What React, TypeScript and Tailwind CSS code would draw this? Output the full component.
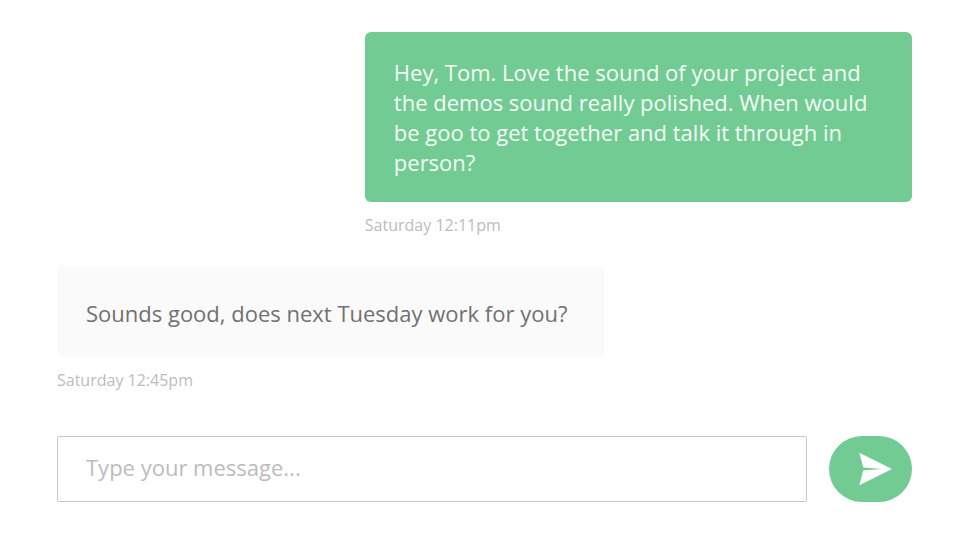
import { useState } from "react";

type Message = { text: string; time: string; sent: boolean };

const messages: Message[] = [
  {
    text: "Hey, Tom. Love the sound of your project and the demos sound really polished. When would be goo to get together and talk it through in person?",
    time: "Saturday 12:11pm",
    sent: true,
  },
  { text: "Sounds good, does next Tuesday work for you?", time: "Saturday 12:45pm", sent: false },
];

function Bubble({ message }: { message: Message }) {
  return (
    <article className={message.sent ? "w-[64%] self-end" : "w-[64%] self-start"}>
      <p
        className={
          message.sent
            ? "rounded-md bg-[#72cb93] px-[29px] pt-[25px] pb-[25px] text-[22px] leading-[30px] text-[#f4fbf6]"
            : "rounded-md bg-[#fafafa] px-[29px] pt-8 pb-[29px] text-[22px] leading-[30px] text-[#717171]"
        }
      >
        {message.text}
      </p>
      <time className="mt-3 block text-[16px] leading-[22px] text-[#bcbcbc]">{message.time}</time>
    </article>
  );
}

export default function App() {
  const [draft, setDraft] = useState("");
  return (
    <main className="min-h-screen bg-white pt-8 pr-14 pb-10 pl-[57px] font-['Open_Sans',sans-serif]">
      <section className="flex flex-col gap-[30px]" aria-label="Conversation">
        {messages.map((message) => (
          <Bubble key={message.time} message={message} />
        ))}
      </section>
      <form
        className="mt-[45px] flex gap-[22px]"
        onSubmit={(event) => {
          event.preventDefault();
          setDraft("");
        }}
      >
        <input
          type="text"
          aria-label="Message"
          placeholder="Type your message..."
          value={draft}
          onChange={(event) => setDraft(event.target.value)}
          className="h-[66px] min-w-0 flex-1 rounded-xs border border-[#c6c6c6] px-7 pb-1 text-[22px] text-[#717171] outline-none placeholder:text-[#bcbcbc]"
        />
        <button
          type="submit"
          aria-label="Send"
          className="flex h-[66px] w-[83px] shrink-0 items-center justify-center rounded-full bg-[#72cb93] pl-2 text-white"
        >
          <svg viewBox="0 0 34 34" className="size-[34px]" fill="currentColor" aria-hidden="true">
            <path d="M1.3 0.7 34 17 1.3 33.3 5.3 18.3 24 17 5.3 15.5Z" />
          </svg>
        </button>
      </form>
    </main>
  );
}
